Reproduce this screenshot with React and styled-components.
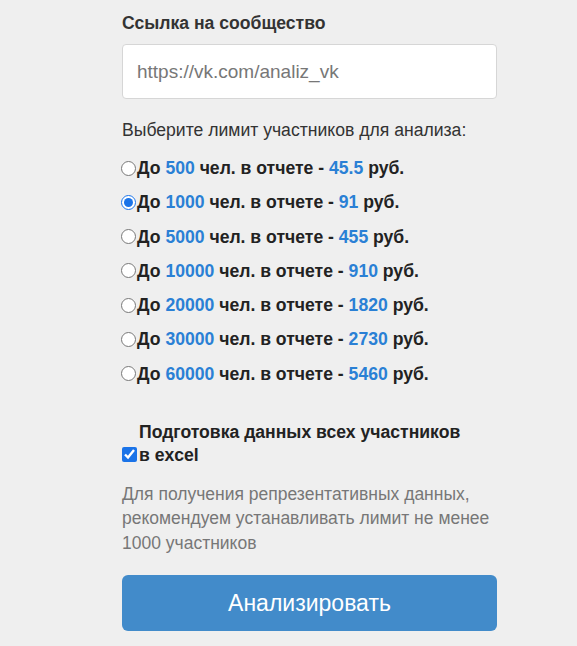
import React from "react";
import styled, { createGlobalStyle } from "styled-components";

const Global = createGlobalStyle`
  html, body { margin: 0; padding: 0; background: #efefef; }
  body { font-family: "Liberation Sans", Arial, sans-serif; color: #333; }
`;

const Page = styled.div`
  width: 577px;
  height: 646px;
  overflow: hidden;
  box-sizing: border-box;
  padding-left: 122px;
`;

const Form = styled.form`
  width: 375px;
  padding-top: 13px;
  display: flex;
  flex-direction: column;
`;

const FieldLabel = styled.label`
  font-size: 17.6px;
  font-weight: bold;
  line-height: 20px;
  color: #333;
`;

const TextInput = styled.input`
  box-sizing: border-box;
  margin-top: 11px;
  height: 55px;
  width: 100%;
  border: 1px solid #d6d6d6;
  border-radius: 4px;
  background: #fff;
  padding: 0 14px;
  font-family: "Liberation Sans", Arial, sans-serif;
  font-size: 19px;
  color: #555;
  outline: none;
  &::placeholder { color: #777; }
`;

const Prompt = styled.p`
  margin: 21px 0 18px;
  font-size: 17.6px;
  line-height: 20px;
  color: #333;
`;

const Options = styled.div`
  display: flex;
  flex-direction: column;
  gap: 14.3px;
`;

const Option = styled.label`
  display: flex;
  align-items: center;
  font-size: 17.6px;
  font-weight: bold;
  line-height: 20px;
  color: #222;
  cursor: pointer;
`;

const Radio = styled.input`
  margin: 0 1px 0 -1px;
  width: 15px;
  height: 15px;
  accent-color: #1a73e8;
`;

const Num = styled.span`
  color: #2a80d5;
`;

const CheckBlock = styled.div`
  margin-top: 36px;
  font-size: 17.6px;
  font-weight: bold;
  line-height: 24px;
  color: #222;
`;

const CheckTitle = styled.div`
  padding-left: 17px;
`;

const CheckRow = styled.label`
  display: flex;
  align-items: center;
  margin-top: -1px;
`;

const Checkbox = styled.input`
  margin: 0 2px 0 0;
  width: 15px;
  height: 15px;
  accent-color: #1a73e8;
`;

const Hint = styled.p`
  margin: 15px 0 0;
  font-size: 17.5px;
  line-height: 24.5px;
  color: #777;
`;

const Submit = styled.button`
  margin-top: 20px;
  height: 56px;
  width: 100%;
  border: none;
  border-radius: 6px;
  background: #428bca;
  color: #fff;
  font-family: "Liberation Sans", Arial, sans-serif;
  font-size: 23px;
  cursor: pointer;
`;

const options = [
  ["500", "45.5"],
  ["1000", "91"],
  ["5000", "455"],
  ["10000", "910"],
  ["20000", "1820"],
  ["30000", "2730"],
  ["60000", "5460"],
];

export default function App() {
  return (
    <Page>
      <Global />
      <Form onSubmit={(e) => e.preventDefault()}>
        <FieldLabel htmlFor="url">Ссылка на сообщество</FieldLabel>
        <TextInput id="url" placeholder="https://vk.com/analiz_vk" />
        <Prompt>Выберите лимит участников для анализа:</Prompt>
        <Options>
          {options.map(([n, p]) => (
            <Option key={n}>
              <Radio type="radio" name="limit" defaultChecked={n === "1000"} />
              До&nbsp;<Num>{n}</Num>&nbsp;чел. в отчете -&nbsp;<Num>{p}</Num>&nbsp;руб.
            </Option>
          ))}
        </Options>
        <CheckBlock>
          <CheckTitle>Подготовка данных всех участников</CheckTitle>
          <CheckRow>
            <Checkbox type="checkbox" defaultChecked />в excel
          </CheckRow>
        </CheckBlock>
        <Hint>
          Для получения репрезентативных данных, рекомендуем устанавливать лимит не менее 1000 участников
        </Hint>
        <Submit type="submit">Анализировать</Submit>
      </Form>
    </Page>
  );
}
